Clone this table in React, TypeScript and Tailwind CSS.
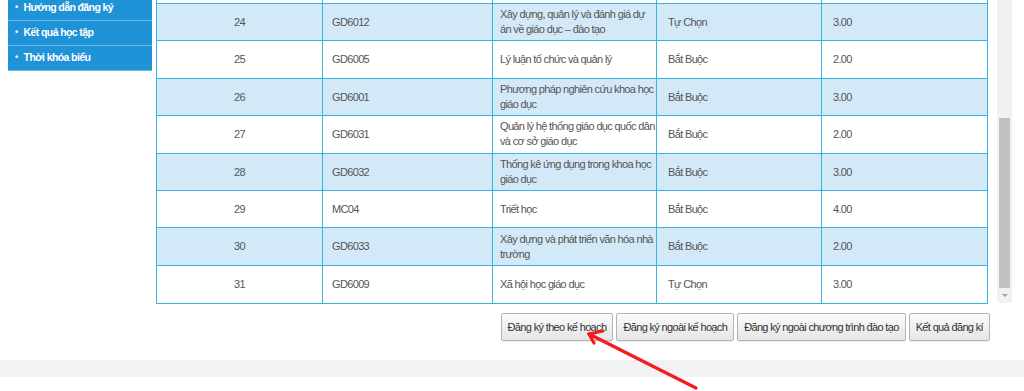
import React from 'react';

type Row = { stt: number; code: string; name: string[]; type: string; credit: string };

const rows: Row[] = [
  { stt: 24, code: 'GD6012', name: ['Xây dựng, quản lý và đánh giá dự', 'án về giáo dục – đào tạo'], type: 'Tự Chọn', credit: '3.00' },
  { stt: 25, code: 'GD6005', name: ['Lý luận tổ chức và quản lý'], type: 'Bắt Buộc', credit: '2.00' },
  { stt: 26, code: 'GD6001', name: ['Phương pháp nghiên cứu khoa học', 'giáo dục'], type: 'Bắt Buộc', credit: '3.00' },
  { stt: 27, code: 'GD6031', name: ['Quản lý hệ thống giáo dục quốc dân', 'và cơ sở giáo dục'], type: 'Bắt Buộc', credit: '2.00' },
  { stt: 28, code: 'GD6032', name: ['Thống kê ứng dụng trong khoa học', 'giáo dục'], type: 'Bắt Buộc', credit: '3.00' },
  { stt: 29, code: 'MC04', name: ['Triết học'], type: 'Bắt Buộc', credit: '4.00' },
  { stt: 30, code: 'GD6033', name: ['Xây dựng và phát triển văn hóa nhà', 'trường'], type: 'Bắt Buộc', credit: '2.00' },
  { stt: 31, code: 'GD6009', name: ['Xã hội học giáo dục'], type: 'Tự Chọn', credit: '3.00' },
];

const menu = ['Hướng dẫn đăng ký', 'Kết quả học tập', 'Thời khóa biểu'];
const buttons = ['Đăng ký theo kế hoạch', 'Đăng ký ngoài kế hoạch', 'Đăng ký ngoài chương trình đào tạo', 'Kết quả đăng kí'];

const cell = 'border-r border-[#36b4e2] flex items-center';

const App: React.FC = () => {
  return (
    <div className="relative w-[1024px] h-[391px] overflow-hidden bg-white font-['Liberation_Sans',Arial,sans-serif] text-[11px] text-[#555]">
      <div className="flex h-[305px]">
        {/* left menu */}
        <div className="w-[144px] ml-[8px] mr-[4px] -mt-[4px] self-start">
          {menu.map((m) => (
            <div key={m} className="h-[25px] bg-[#1f93d7] border-b border-[#6cb8e6] flex items-center pl-[7px] text-white font-bold text-[10.5px] tracking-[-0.6px]">
              <span className="mr-[6px] text-[9px]">•</span>
              {m}
            </div>
          ))}
        </div>

        {/* table */}
        <div className="w-[832px] h-[305px] overflow-hidden">
          <div className="border-l border-r border-b border-[#36b4e2] -mt-[34px]">
            <div className="flex h-[38px] border-b border-[#36b4e2] bg-white">
              <div className={`${cell} w-[166px]`} />
              <div className={`${cell} w-[170px]`} />
              <div className={`${cell} w-[164px]`} />
              <div className={`${cell} w-[165px]`} />
              <div className="flex-1" />
            </div>
            {rows.map((r, i) => (
              <div
                key={r.stt}
                className={`flex h-[37.4px] ${i < rows.length - 1 ? 'border-b border-[#36b4e2]' : ''} ${i % 2 === 0 ? 'bg-[#d3e9f7]' : 'bg-white'} tracking-[-0.65px]`}
              >
                <div className={`${cell} w-[166px] justify-center`}>{r.stt}</div>
                <div className={`${cell} w-[170px] pl-[9px]`}>{r.code}</div>
                <div className={`${cell} w-[164px] pl-[7px] leading-[15px]`}>
                  <div>
                    {r.name.map((l) => (
                      <div key={l} className="whitespace-nowrap">{l}</div>
                    ))}
                  </div>
                </div>
                <div className={`${cell} w-[165px] pl-[11px]`}>{r.type}</div>
                <div className="flex-1 flex items-center pl-[11px]">{r.credit}</div>
              </div>
            ))}
          </div>
        </div>

        {/* scrollbar */}
        <div className="ml-[9px] w-[15px] h-[303px] bg-[#f1f1f1] flex flex-col">
          <div className="h-[118px]" />
          <div className="mx-[2px] h-[170px] bg-[#c1c1c1]" />
          <div className="flex-1 flex items-center justify-center">
            <div className="w-0 h-0 border-l-[3px] border-r-[3px] border-t-[3px] border-l-transparent border-r-transparent border-t-[#a0a0a0]" />
          </div>
        </div>
      </div>

      {/* buttons */}
      <div className="flex justify-end gap-[3px] mt-[8px] pr-[34px]">
        {buttons.map((b) => (
          <button
            key={b}
            className="h-[28px] px-[6px] border border-[#b5b5b5] rounded-[2px] bg-gradient-to-b from-[#fbfbfb] to-[#e6e6e6] text-[#333] text-[11px] tracking-[-0.65px] whitespace-nowrap shadow-[0_1px_1px_rgba(0,0,0,0.08)]"
          >
            {b}
          </button>
        ))}
      </div>

      {/* footer bar */}
      <div className="mt-[19px] h-[17px] bg-[#f2f2f2]" />

      {/* red annotation arrow */}
      <svg className="absolute left-0 top-0 pointer-events-none" width="1024" height="391">
        <g stroke="#f41c1c" strokeWidth="3.2" strokeLinecap="round" fill="none">
          <line x1="696" y1="388" x2="589" y2="334" />
          <line x1="589" y1="334" x2="603" y2="331" />
          <line x1="589" y1="334" x2="594" y2="343" />
        </g>
      </svg>
    </div>
  );
};

export default App;
